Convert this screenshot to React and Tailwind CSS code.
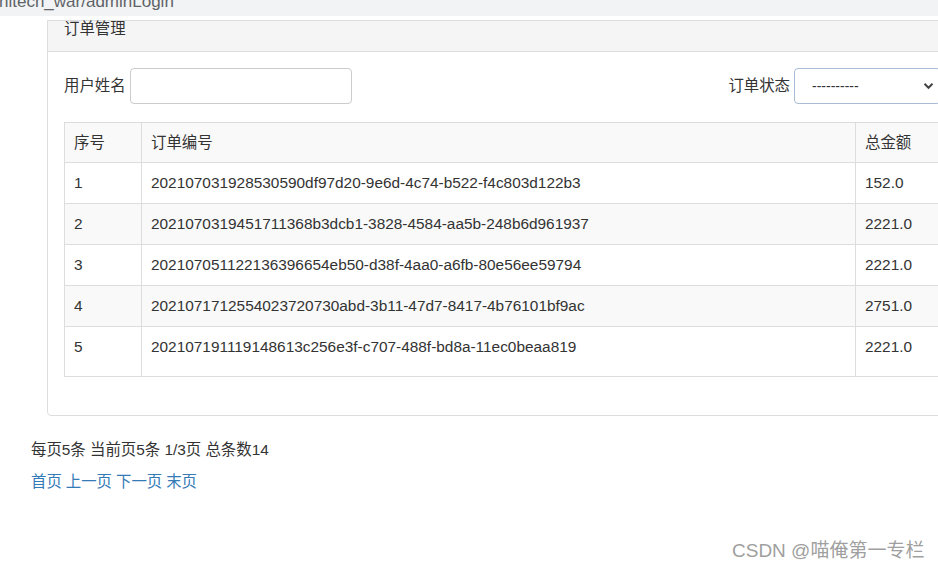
import React from 'react';

const orders = [
  { id: 1, no: '202107031928530590df97d20-9e6d-4c74-b522-f4c803d122b3', total: '152.0' },
  { id: 2, no: '202107031945171136 8b3dcb1-3828-4584-aa5b-248b6d961937'.replace(' ', ''), total: '2221.0' },
  { id: 3, no: '20210705112213639 6654eb50-d38f-4aa0-a6fb-80e56ee59794'.replace(' ', ''), total: '2221.0' },
  { id: 4, no: '202107171255402372 0730abd-3b11-47d7-8417-4b76101bf9ac'.replace(' ', ''), total: '2751.0' },
  { id: 5, no: '20210719111914861 3c256e3f-c707-488f-bd8a-11ec0beaa819'.replace(' ', ''), total: '2221.0' }
];

const App = () => {
  return (
    <div
      className="relative w-[938px] h-[571px] overflow-hidden bg-white text-[#333] text-[15.4px] leading-[22px]"
      style={{ fontFamily: '"Liberation Sans", "Noto Sans CJK SC", sans-serif' }}
    >
      {/* 地址栏残留 */}
      <div className="h-[16px] bg-[#f1f3f4] overflow-hidden">
        <div className="-mt-[8px] -ml-[1px] text-[17px] leading-[20px] text-[#5f6368] whitespace-nowrap">
          nitech_war/adminLogin
        </div>
      </div>

      <div className="pt-[4px] pl-[31px]">
        {/* 面板 */}
        <div className="ml-[16px] w-[920px] border border-[#ddd] rounded-b-[4px] bg-white">
          <div className="h-[31px] px-[16px] pt-[1px] leading-[14px] bg-[#f5f5f5] border-b border-[#ddd]">订单管理</div>

          <div className="pl-[16px] pt-[16px] pb-[16px]">
            <div className="flex items-center h-[36px]">
              <label className="mr-[4px]">用户姓名</label>
              <div className="w-[222px] h-[36px] border border-[#ccc] rounded-[4px] bg-white" />
              <div className="flex-1" />
              <label className="mr-[4px]">订单状态</label>
              <div className="w-[147px] h-[36px] border border-[#a9bcd6] rounded-[4px] bg-white flex items-center pl-[17px] pr-[6px] mr-[25px]">
                <span className="flex-1 text-[14px]">----------</span>
                <svg width="11" height="8" viewBox="0 0 11 8">
                  <path d="M1.5 1.8 L5.5 5.8 L9.5 1.8" fill="none" stroke="#444" strokeWidth="2" />
                </svg>
              </div>
            </div>

            <table className="mt-[18px] mb-[22px] w-[878px] border-collapse border border-[#ddd] table-fixed">
              <colgroup>
                <col className="w-[77px]" />
                <col className="w-[714px]" />
                <col />
              </colgroup>
              <thead>
                <tr className="bg-[#f9f9f9]">
                  <th className="border border-[#ddd] px-[9px] pt-[9px] pb-[8px] text-left font-normal">序号</th>
                  <th className="border border-[#ddd] px-[9px] pt-[9px] pb-[8px] text-left font-normal">订单编号</th>
                  <th className="border border-[#ddd] px-[9px] pt-[9px] pb-[8px] text-left font-normal">总金额</th>
                </tr>
              </thead>
              <tbody>
                {orders.map((o, i) => (
                  <tr key={o.id} className={i % 2 === 1 ? 'bg-[#f9f9f9]' : 'bg-white'}>
                    <td className={`border border-[#ddd] px-[9px] pt-[9px] ${i === 4 ? 'pb-[18px]' : 'pb-[9px]'}`}>{o.id}</td>
                    <td className={`border border-[#ddd] px-[9px] pt-[9px] ${i === 4 ? 'pb-[18px]' : 'pb-[9px]'}`}>{o.no}</td>
                    <td className={`border border-[#ddd] px-[9px] pt-[9px] ${i === 4 ? 'pb-[18px]' : 'pb-[9px]'}`}>{o.total}</td>
                  </tr>
                ))}
              </tbody>
            </table>
          </div>
        </div>

        {/* 分页 */}
        <div className="mt-[23px]">每页5条 当前页5条 1/3页 总条数14</div>
        <div className="mt-[10px] text-[#337ab7] flex gap-[4px]">
          <a>首页</a>
          <a>上一页</a>
          <a>下一页</a>
          <a>末页</a>
        </div>
      </div>

      <div className="absolute left-[732px] top-[539px] text-[19px] leading-[24px] text-[#9f9f9f] whitespace-nowrap">
        CSDN @喵俺第一专栏
      </div>
    </div>
  );
};

export default App;
